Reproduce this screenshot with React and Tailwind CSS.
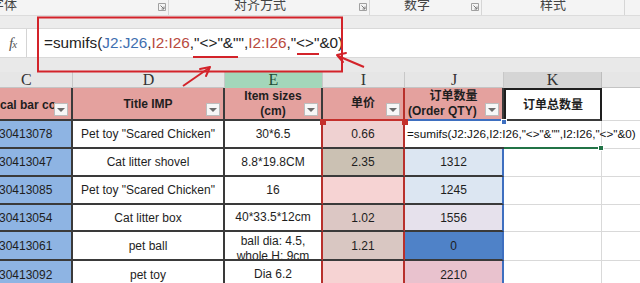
const sans = "font-['Liberation_Sans','Noto_Sans_CJK_SC',sans-serif]";

function Launcher() {
  return (
    <svg width="8" height="8" viewBox="0 0 8 8" className="shrink-0">
      <path d="M0.5 0.5H7.5V7.5H0.5Z" fill="none" stroke="#a0a0a0" strokeWidth="1" />
      <path d="M2.5 2.5L6 6M6 3.5V6H3.5" fill="none" stroke="#7a7a7a" strokeWidth="1" />
    </svg>
  );
}

function Drop() {
  return (
    <div className="absolute right-[3px] bottom-[3px] w-[14px] h-[13px] bg-[#f7f7f7] border border-[#bdbdbd] flex items-center justify-center">
      <div className="w-0 h-0 border-l-[4px] border-r-[4px] border-t-[4px] border-l-transparent border-r-transparent border-t-[#6b6b6b]" />
    </div>
  );
}

const grid = "grid grid-cols-[73px_152px_98px_82px_99px_98px_38px]";
const cell = "relative flex items-center justify-center text-[12px] text-[#1e1e1e] border-b-2 border-b-[#3a3a3a] overflow-hidden";

const rows = [
  { c: "30413078", d: 'Pet toy "Scared Chicken"', e: ["30*6.5"], i: "0.66", ibg: "bg-[#efd1d1]", j: null, jbg: "bg-white", h: "h-[28px]" },
  { c: "30413047", d: "Cat litter shovel", e: ["8.8*19.8CM"], i: "2.35", ibg: "bg-[#cbc1b3]", j: "1312", jbg: "bg-[#dce6f2]", h: "h-[28px]" },
  { c: "30413085", d: 'Pet toy "Scared Chicken"', e: ["16"], i: "", ibg: "bg-[#f6d3d3]", j: "1245", jbg: "bg-[#dce6f2]", h: "h-[28px]" },
  { c: "30413054", d: "Cat litter box", e: ["40*33.5*12cm"], i: "1.02", ibg: "bg-[#dcc7c4]", j: "1556", jbg: "bg-[#e6e1ec]", h: "h-[27px]" },
  { c: "30413061", d: "pet ball", e: ["ball dia: 4.5,", "whole H: 9cm"], i: "1.21", ibg: "bg-[#d9c7c2]", j: "0", jbg: "bg-[#4f82c8]", h: "h-[29px]" },
  { c: "30413092", d: "pet toy", e: ["Dia 6.2"], i: "", ibg: "bg-[#f6d3d3]", j: "2210", jbg: "bg-[#e9c2ce]", h: "h-[29px]" },
];

export default function App() {
  return (
    <div className={`relative w-[640px] h-[283px] overflow-hidden bg-white ${sans}`}>
      {/* ribbon labels */}
      <div className="h-[15px] flex bg-[#f4f4f4] overflow-hidden text-[13px] text-[#444] leading-[16px]">
        <div className="w-[169px] flex items-start justify-between border-r border-[#d6d6d6] pr-[2px]">
          <span className="-ml-[9px] -mt-[3px]">字体</span>
          <div className="mt-[3px]"><Launcher /></div>
        </div>
        <div className="w-[201px] flex items-start justify-between border-r border-[#d6d6d6] pr-[2px]">
          <span className="ml-[65px] -mt-[3px]">对齐方式</span>
          <div className="mt-[3px]"><Launcher /></div>
        </div>
        <div className="w-[112px] flex items-start justify-between border-r border-[#d6d6d6] pr-[2px]">
          <span className="ml-[34px] -mt-[3px]">数字</span>
          <div className="mt-[3px]"><Launcher /></div>
        </div>
        <div className="w-[143px] flex items-start border-r border-[#d6d6d6]">
          <span className="ml-[58px] -mt-[3px]">样式</span>
        </div>
      </div>
      <div className="h-[13px] bg-[#ececec] border-t border-[#dcdcdc]" />
      {/* formula bar */}
      <div className="h-[30px] flex bg-white border-y border-[#d9d9d9]">
        <div className="w-[27px] flex items-center justify-center border-r border-[#d4d4d4] font-['Liberation_Serif',serif] italic text-[15px] text-[#555]">
          f<span className="text-[11px] -ml-[1px] mt-[3px]">x</span>
        </div>
        <div className="flex items-center pl-[17px] text-[15.3px] text-[#222] whitespace-nowrap">
          <span>=sumifs(</span>
          <span className="text-[#3f6fb0]">J2:J26</span>
          <span>,</span>
          <span className="text-[#b84a3e]">I2:I26</span>
          <span>,"&lt;&gt;"&amp;"",</span>
          <span className="text-[#b84a3e]">I2:I26</span>
          <span>,"&lt;&gt;"&amp;0)</span>
        </div>
      </div>
      <div className="h-[14px] bg-[#e9e9e9]" />
      {/* column letters */}
      <div className={`${grid} h-[16px] bg-[#e6e6e6] border-b border-[#c4c4c4] font-['Liberation_Serif',serif] text-[16px] text-[#333] leading-none`}>
        <div className="flex items-center pl-[21px] border-r border-[#c8c8c8]">C</div>
        <div className="flex items-center justify-center border-r border-[#c8c8c8]">D</div>
        <div className="flex items-center justify-center border-r border-[#c8c8c8] bg-[#a3d6ba] text-[#1d4d33]">E</div>
        <div className="flex items-center justify-center border-r border-[#c8c8c8]">I</div>
        <div className="flex items-center justify-center border-r border-[#c8c8c8]">J</div>
        <div className="flex items-center justify-center border-r border-[#bdbdbd] bg-[#d5d5d5]">K</div>
        <div />
      </div>
      {/* table header row */}
      <div className={`${grid} h-[33px] font-bold`}>
        <div className={`${cell} justify-start! bg-[#e4a19e] border-r-2 border-r-[#3a3a3a]`}>
          <span className="mt-[2px]">cal bar co</span>
          <Drop />
        </div>
        <div className={`${cell} bg-[#e4a19e] border-r-2 border-r-[#3a3a3a]`}>
          <span>Title IMP</span>
          <Drop />
        </div>
        <div className={`${cell} flex-col bg-[#e4a19e] border-r-2 border-r-[#3a3a3a] leading-[15px]`}>
          <span>Item sizes</span>
          <span>(cm)</span>
          <Drop />
        </div>
        <div className={`${cell} bg-[#e4a19e] border-r-2 border-r-[#b8302c] border-b-[#c4302c] overflow-visible!`}>
          <span className="-mt-[2px]">单价</span>
          <Drop />
        </div>
        <div className={`${cell} flex-col bg-[#e4a19e] border-r-2 border-r-[#3a3a3a] border-b-[#3e6fc0] leading-[15px]`}>
          <span>订单数量</span>
          <span className="self-start pl-[3px]">(Order QTY)</span>
          <Drop />
        </div>
        <div className={`${cell} bg-white border-2 border-[#1e1e1e]`}>
          <span>订单总数量</span>
        </div>
        <div className="border-b border-[#d9d9d9]" />
      </div>
      {/* data rows */}
      {rows.map((r, idx) => (
        <div key={idx} className={`${grid} ${r.h}`}>
          <div className={`${cell} justify-start! bg-[#8eb4e3] border-r-2 border-r-[#3a3a3a]`}>
            <span className="-ml-[1px]">{r.c}</span>
          </div>
          <div className={`${cell} bg-white border-r-2 border-r-[#3a3a3a]`}>{r.d}</div>
          <div className={`${cell} flex-col bg-white border-r-2 border-r-[#b8302c] leading-[15px]`}>
            {r.e.map((t, k) => (
              <span key={k} className={r.e.length > 1 && k === 1 ? "-mb-[7px]" : ""}>{t}</span>
            ))}
          </div>
          <div className={`${cell} ${r.ibg} border-r-2 border-r-[#b8302c]`}>{r.i}</div>
          {r.j === null ? (
            <div className={`${cell} justify-start! bg-white border-b-[#3a3a3a] overflow-visible! z-10`}>
              <span className="whitespace-nowrap pl-[2px] text-[11.7px] text-[#111]">
                =sumifs(J2:J26,I2:I26,"&lt;&gt;"&amp;"",I2:I26,"&lt;&gt;"&amp;0)
              </span>
            </div>
          ) : (
            <div className={`${cell} ${r.jbg} border-r-2 border-r-[#3e6fc0]`}>{r.j}</div>
          )}
          {idx === 0 ? (
            <div className="relative border-b-2 border-b-[#217346] border-r border-r-[#d9d9d9]">
              <div className="absolute -right-[3px] -bottom-[4px] w-[6px] h-[6px] bg-[#217346] border border-white" />
            </div>
          ) : (
            <div className="border-b border-r border-[#d9d9d9]" />
          )}
          <div className="border-b border-[#d9d9d9]" />
        </div>
      ))}

      {/* range corner handles */}
      <div className="absolute left-[320px] top-[119px] w-[6px] h-[6px] bg-[#c4302c] z-20" />
      <div className="absolute left-[402px] top-[119px] w-[6px] h-[6px] bg-[#c4302c] z-20" />
      <div className="absolute left-[501px] top-[119px] w-[6px] h-[6px] bg-[#3e6fc0] border border-white z-20" />

      {/* annotations */}
      <svg className="absolute inset-0 pointer-events-none z-30" width="640" height="283" viewBox="0 0 640 283">
        <rect x="38" y="17.5" width="304" height="54" fill="none" stroke="#d3232a" strokeWidth="2" />
        <line x1="193" y1="57" x2="238" y2="57" stroke="#d3232a" strokeWidth="2" />
        <line x1="297" y1="54" x2="319" y2="54" stroke="#d3232a" strokeWidth="2" />
        <line x1="183" y1="86" x2="209" y2="68" stroke="#d3232a" strokeWidth="2" />
        <path d="M210 67 L200 69 M210 67 L206 76" stroke="#d3232a" strokeWidth="2" fill="none" strokeLinecap="round" />
        <line x1="364" y1="67" x2="338" y2="56" stroke="#d3232a" strokeWidth="2" />
        <path d="M337 55 L346 53 M337 55 L343 62" stroke="#d3232a" strokeWidth="2" fill="none" strokeLinecap="round" />
      </svg>
    </div>
  );
}
